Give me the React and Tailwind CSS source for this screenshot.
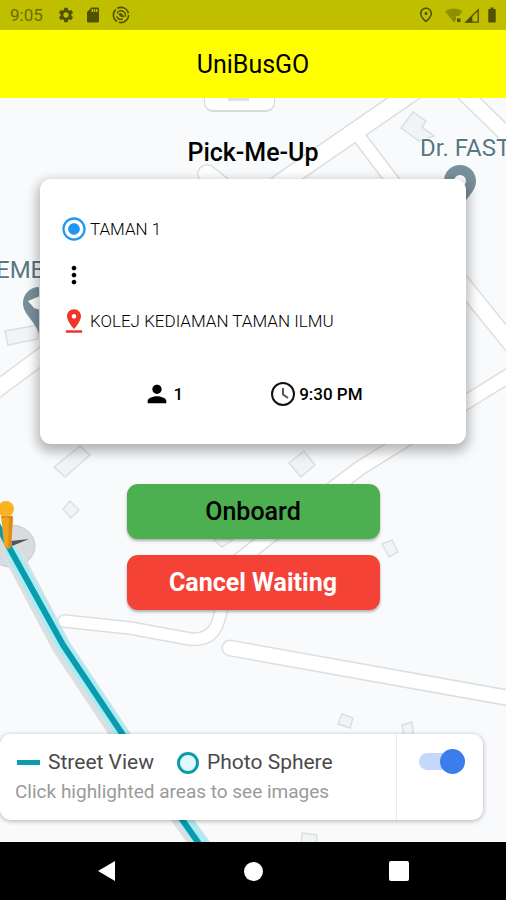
import { useState } from "react";
import {
  MdSettings,
  MdSdCard,
  MdOutlinePlace,
  MdBatteryFull,
  MdRadioButtonChecked,
  MdMoreVert,
  MdPinDrop,
  MdPerson,
} from "react-icons/md";

function StatusBar() {
  return (
    <div className="flex h-[30px] items-center justify-between bg-[#bfbf00] pl-[10px] pr-[5px] text-[#515100]">
      <div className="flex items-center">
        <span className="text-[17px] leading-[20px] text-[#6b6b00]">9:05</span>
        <MdSettings className="ml-[14px] size-[18px]" />
        <MdSdCard className="ml-[9px] size-[18px]" />
        <svg className="ml-[10px] size-[18px]" viewBox="0 0 18 18" fill="none" stroke="currentColor">
          <circle cx="9" cy="9" r="7.6" strokeWidth="1.6" strokeDasharray="14 1.9" />
          <path d="M5 7.2C6.2 4.8 9 4.1 11.2 5.3C13.2 6.4 13.9 8.6 13 10.8" strokeWidth="1.4" />
          <path d="M4.8 10.4C5.8 12.8 8.3 13.8 10.6 13" strokeWidth="1.4" />
          <path d="M6.6 8.2C8.6 6.8 10.8 8 11.4 11C9.6 10.8 8 9.8 6.6 8.2Z" fill="currentColor" strokeWidth="1" />
        </svg>
      </div>
      <div className="flex items-center">
        <MdOutlinePlace className="mr-[10px] size-[18px]" />
        <svg className="h-[15px] w-[18px]" viewBox="0 0 18 15">
          <path d="M0 3.4C5 -0.6 13 -0.6 17.4 3.4L14 8H11V12L9 14.4Z" fill="#8f8f00" />
          <rect x="12" y="10.5" width="3.4" height="3.6" fill="currentColor" />
        </svg>
        <svg className="ml-[1px] h-[15px] w-[16px]" viewBox="0 0 16 15">
          <path d="M1.8 14.2L14.2 1.8V14.2Z" fill="none" stroke="currentColor" strokeWidth="1.3" />
          <path d="M1 14.6L8.4 7.2V14.6Z" fill="currentColor" />
        </svg>
        <MdBatteryFull className="ml-[3px] size-[18px]" />
      </div>
    </div>
  );
}

function MapBackdrop() {
  return (
    <svg
      className="absolute inset-0 size-full"
      viewBox="0 98 506 744"
      preserveAspectRatio="xMidYMin slice"
      aria-hidden="true"
    >
      <rect y="98" width="506" height="744" fill="#f8fafb" />

      {/* Building footprints */}
      <g fill="#f1f4f5" stroke="#dcdfe1" strokeWidth="1.5">
        <path d="M413 112L401 128L419 141L434 136L422 127L426 121Z" />
        <path d="M5 331L38 325V339L8 345Z" />
        <path d="M54 467L80 446L90 455L65 477Z" />
        <path d="M289 463L304 451L315 465L301 477Z" />
        <path d="M63 509L70 501L79 510L71 518Z" />
        <path d="M213 539L222 547L234 539Z" />
        <path d="M382 544L392 540L398 552L389 557Z" />
        <path d="M342 714L353 718L350 728L338 724Z" />
        <path d="M402 725L412 722L414 738H404Z" />
        <path d="M302 833L317 835L316 846H301Z" />
      </g>

      {/* Road casings */}
      <g fill="none" stroke="#dcdfe1" strokeLinecap="round" strokeLinejoin="round">
        <path d="M424 84L279 184" strokeWidth="20" />
        <path d="M357 134L404 196" strokeWidth="15" />
        <path d="M463 92L520 148" strokeWidth="17" />
        <path d="M207 174L222 186" strokeWidth="20" />
        <path d="M460 281L520 355" strokeWidth="18" />
        <path d="M-12 396L50 350" strokeWidth="18" />
        <path d="M518 370L360 468L270 536L214 580" strokeWidth="16" />
        <path d="M64 621L130 628L190 639Q212 641 218 622L224 600" strokeWidth="14" />
        <path d="M230 648L520 700" strokeWidth="17" />
      </g>
      <g fill="none" stroke="#ffffff" strokeLinecap="round" strokeLinejoin="round">
        <path d="M424 84L279 184" strokeWidth="17" />
        <path d="M357 134L404 196" strokeWidth="12" />
        <path d="M463 92L520 148" strokeWidth="14" />
        <path d="M207 174L222 186" strokeWidth="17" />
        <path d="M460 281L520 355" strokeWidth="15" />
        <path d="M-12 396L50 350" strokeWidth="15" />
        <path d="M518 370L360 468L270 536L214 580" strokeWidth="13" />
        <path d="M64 621L130 628L190 639Q212 641 218 622L224 600" strokeWidth="11" />
        <path d="M230 648L520 700" strokeWidth="14" />
      </g>

      {/* Compass disc and covered street */}
      <ellipse cx="11" cy="546" rx="24" ry="21" fill="#d9dcde" stroke="#c8cbcd" />
      <g fill="none">
        <path d="M10 549L61 646L121 736L203 848" stroke="#dcdfe1" strokeWidth="19" />
        <path d="M10 549L63 645L123 735L205 848" stroke="#a9ecf4" strokeWidth="13" />
        <path d="M-4 522L10 549L63 645L123 735L202 848" stroke="#0a9cad" strokeWidth="6" />
      </g>
      <path d="M11 541L29 539L12 546Z" fill="#50545d" />
      <path d="M1 516H13L11 547L8 549L4 545Z" fill="#f1a51f" />
      <path d="M9 517H13L11 547L8 549Z" fill="#db8d16" />
      <circle cx="6" cy="509" r="8" fill="#fbb326" />
      <path d="M1 517H12" stroke="#c87810" />

      {/* Collapsed control and place markers */}
      <rect x="204" y="84" width="71" height="28" rx="9" fill="#d8dbdd" />
      <rect x="205" y="82" width="69" height="28" rx="8" fill="#ffffff" />
      <rect x="228" y="96" width="21" height="5" fill="#e0e0e0" />
      <path d="M460 165C469 165 476 172 476 181C476 193 464 198 460 212C456 198 444 193 444 181C444 172 451 165 460 165Z" fill="#78909c" />
      <circle cx="460" cy="181" r="6" fill="#ffffff" />
      <path d="M39 287C30 287 23 294 23 303C23 315 35 320 39 334Z" fill="#78909c" />
      <path d="M28 301L40 296V310L34 308Z" fill="#ffffff" />
      <g fill="#587683" stroke="#ffffff" strokeWidth="2" paintOrder="stroke" fontSize="24">
        <text x="420" y="156">Dr. FAST</text>
        <text x="-4" y="278">EMB</text>
      </g>
    </svg>
  );
}

function ClockIcon() {
  return (
    <svg className="size-7" viewBox="0 0 28 28" fill="none" aria-hidden="true">
      <circle cx="14" cy="14" r="11" stroke="#111111" strokeWidth="2" />
      <path d="M14 8V14.5L19 18" stroke="#555555" strokeWidth="2" />
    </svg>
  );
}

function TripCard() {
  return (
    <section className="relative mt-3 flex flex-col gap-[18px] rounded-[11px] bg-white px-5 py-9 text-[17px] leading-[20px] text-black shadow-[0_5px_12px_3px_rgba(0,0,0,0.28)]">
      <div className="flex items-center gap-[2px]">
        <MdRadioButtonChecked className="size-7 text-[#2196f3]" />
        <span className="font-light">TAMAN 1</span>
      </div>
      <MdMoreVert className="size-7" />
      <div className="flex items-center gap-[2px]">
        <MdPinDrop className="size-7 text-[#f0352b]" />
        <span className="font-light">KOLEJ KEDIAMAN TAMAN ILMU</span>
      </div>
      <div className="mt-[27px] flex items-center justify-center gap-[86px] font-medium">
        <div className="flex items-center gap-[2px]">
          <MdPerson className="size-7" />
          <span>1</span>
        </div>
        <div className="flex items-center gap-[2px]">
          <ClockIcon />
          <span>9:30 PM</span>
        </div>
      </div>
    </section>
  );
}

function StreetViewLegend() {
  const [on, setOn] = useState(true);
  return (
    <section className="relative mt-auto mb-[22px] mr-[23px] flex h-[86px] rounded-[11px] bg-white shadow-[0_1px_5px_rgba(0,0,0,0.3)]">
      <div className="flex flex-1 flex-col justify-center pl-[15px]">
        <div className="flex items-center text-[21px] leading-[29px] text-[#4a4a4a]">
          <span className="ml-[2px] h-[5px] w-[23px] bg-[#0a9cad]" />
          <span className="ml-[8px]">Street View</span>
          <span className="ml-[23px] size-[22px] rounded-full border-[3px] border-[#0a9cad] bg-[#e0f7fb]" />
          <span className="ml-[8px]">Photo Sphere</span>
        </div>
        <p className="text-[19px] leading-[29px] text-[#9a9a9a]">Click highlighted areas to see images</p>
      </div>
      <div className="w-[87px] border-l border-[#ebebeb] pl-[22px] pt-[15px]">
        <label className="relative flex h-[25px] w-[46px] cursor-pointer items-center">
          <input
            type="checkbox"
            className="peer sr-only"
            checked={on}
            onChange={() => setOn(!on)}
            aria-label="Street View coverage"
          />
          <span className="h-[17px] w-full rounded-full bg-gray-300 peer-checked:bg-[#c5d7fb]" />
          <span className="absolute left-0 size-[25px] rounded-full bg-gray-100 peer-checked:left-auto peer-checked:right-0 peer-checked:bg-[#3b7ded]" />
        </label>
      </div>
    </section>
  );
}

function NavBar() {
  return (
    <nav className="flex h-[58px] items-center justify-center bg-black text-white">
      <button type="button" aria-label="Back" className="flex w-[146px] justify-center">
        <svg className="h-[22px] w-[20px]" viewBox="0 0 20 22">
          <path d="M1 11L18 1V21Z" fill="currentColor" />
        </svg>
      </button>
      <button type="button" aria-label="Home" className="flex w-[146px] justify-center">
        <span className="size-[19px] rounded-full bg-white" />
      </button>
      <button type="button" aria-label="Recent apps" className="flex w-[146px] justify-center">
        <span className="size-[20px] rounded-[2px] bg-white" />
      </button>
    </nav>
  );
}

export default function App() {
  return (
    <div className="flex min-h-screen flex-col font-[Roboto,sans-serif]">
      <StatusBar />
      <header className="flex h-[68px] items-center justify-center bg-[#ffff00] pt-[2px]">
        <h1 className="text-[25px] leading-[28px] text-black">UniBusGO</h1>
      </header>
      <main className="relative flex flex-1 flex-col overflow-hidden">
        <MapBackdrop />
        <div className="relative px-10 pt-[41px]">
          <h2 className="text-center text-[25px] font-medium leading-[28px] text-black">Pick-Me-Up</h2>
          <TripCard />
        </div>
        <div className="relative mx-auto mt-10 mb-10 flex w-1/2 flex-col gap-4 text-[25px] leading-[28px]">
          <button type="button" className="h-[55px] rounded-[11px] bg-[#4caf50] font-medium text-black shadow-[0_2px_3px_rgba(0,0,0,0.3)]">
            Onboard
          </button>
          <button type="button" className="h-[55px] rounded-[11px] bg-[#f44336] font-bold text-white shadow-[0_2px_3px_rgba(0,0,0,0.3)]">
            Cancel Waiting
          </button>
        </div>
        <StreetViewLegend />
      </main>
      <NavBar />
    </div>
  );
}
